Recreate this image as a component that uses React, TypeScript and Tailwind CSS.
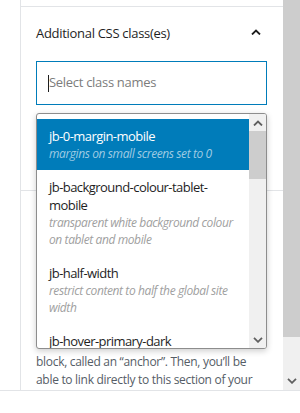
import React from "react";

const Chevron = ({ up, className }: { up?: boolean; className?: string }) => (
  <svg width="10" height="6" viewBox="0 0 10 6" className={className}>
    {up ? (
      <path d="M1 5.5 L5 1.5 L9 5.5" fill="none" stroke="currentColor" strokeWidth="1.8" />
    ) : (
      <path d="M1 0.8 L5 4.8 L9 0.8" fill="none" stroke="currentColor" strokeWidth="1.8" />
    )}
  </svg>
);

const items = [
  { t: ["jb-0-margin-mobile"], d: ["margins on small screens set to 0"], sel: true },
  {
    t: ["jb-background-colour-tablet-", "mobile"],
    d: ["transparent white background colour", "on tablet and mobile"],
  },
  { t: ["jb-half-width"], d: ["restrict content to half the global site", "width"] },
  { t: ["jb-hover-primary-dark"], d: ["primary dark colour on hover"] },
];

export default function App() {
  return (
    <div
      className="relative w-[300px] h-[413px] overflow-hidden bg-white text-[#1e1e1e]"
      style={{ fontFamily: '"Open Sans", "Noto Sans", sans-serif' }}
    >
      <div className="flex h-[391px] border-b border-[#e2e4e7]">
        <div className="w-[283px] h-full pl-[20px] overflow-hidden">
          <div className="h-full border-l border-[#e2e4e7] pt-[6px]">
            <div className="border-t border-[#e2e4e7] h-full flex flex-col">
              <div className="pl-[15px] pr-[16px] pt-[17px] pb-[0px] border-b border-[#e2e4e7] h-[184px]">
                <div className="flex items-center justify-between h-[19px]">
                  <span className="text-[13px] leading-[19px] tracking-[-0.3px]">Additional CSS class(es)</span>
                  <Chevron up className="text-[#1e1e1e] mr-[6px] mb-[3px]" />
                </div>
                <div className="mt-[18px] h-[44px] border border-[#007cba] flex items-center pl-[11px]">
                  <span className="w-px h-[17px] bg-[#1e1e1e]" />
                  <span className="text-[13px] text-[#7c7c7c] tracking-[-0.3px]">Select class names</span>
                </div>
              </div>
              <div className="pl-[15px] pt-[162px] text-[12px] leading-[18px] text-[#555d66] whitespace-nowrap tracking-[-0.3px]">
                <div>block, called an “anchor”. Then, you’ll be</div>
                <div>able to link directly to this section of your</div>
              </div>
            </div>
          </div>
        </div>
        <div className="w-[17px] h-full flex flex-col">
          <div className="h-[337px] bg-[#cdcdcd]" />
          <div className="flex-1 bg-[#f0f0f0] flex items-end justify-center pb-[6px]">
            <Chevron className="text-[#606060]" />
          </div>
        </div>
      </div>

      <div className="absolute left-[36px] top-[113px] w-[231px] h-[236px] border border-[#8d8d8d] rounded-[3px] bg-white shadow-[0_2px_6px_rgba(0,0,0,0.2)] flex overflow-hidden">
        <div className="flex-1 pt-[5px] overflow-hidden">
          {items.map((it, i) => (
            <div
              key={i}
              className={`pl-[12px] pr-[8px] py-[8px] ${it.sel ? "bg-[#007cba] text-white" : ""}`}
            >
              {it.t.map((l, j) => (
                <div key={j} className="text-[13px] leading-[18px] whitespace-nowrap tracking-[-0.55px]">
                  {l}
                </div>
              ))}
              {it.d.map((l, j) => (
                <div
                  key={j}
                  className={`text-[12px] leading-[17px] italic whitespace-nowrap tracking-[-0.4px] ${
                    it.sel ? "text-[#9fcbe3]" : "text-[#a0a0a0]"
                  }`}
                >
                  {l}
                </div>
              ))}
            </div>
          ))}
        </div>
        <div className="w-[17px] bg-[#f0f0f0] flex flex-col items-center">
          <div className="h-[17px] flex items-center justify-center">
            <Chevron up className="text-[#606060]" />
          </div>
          <div className="w-full h-[48px] bg-[#cdcdcd]" />
          <div className="flex-1" />
          <div className="h-[17px] flex items-center justify-center">
            <Chevron className="text-[#606060]" />
          </div>
        </div>
      </div>
    </div>
  );
}
